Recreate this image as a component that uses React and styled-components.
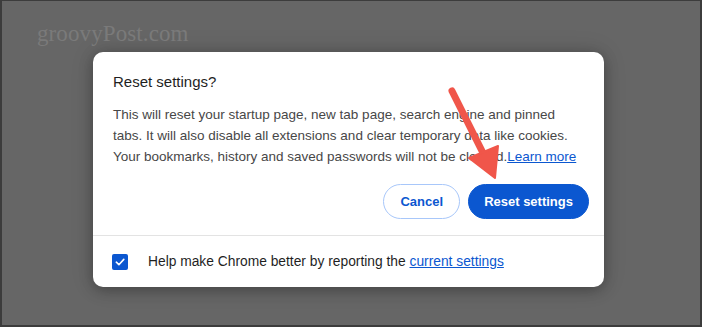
import React from "react";
import styled, { createGlobalStyle } from "styled-components";

const Global = createGlobalStyle`
  html, body { margin: 0; padding: 0; }
  body { width: 702px; height: 327px; overflow: hidden; background: #666; }
  #root { width: 702px; height: 327px; }
`;

const Frame = styled.div`
  position: relative;
  box-sizing: border-box;
  width: 702px;
  height: 327px;
  background: #666666;
  border: 2px solid #3c3c3c;
  border-top-width: 1px;
  padding: 51px 0 0 91px;
  font-family: "Liberation Sans", Arial, sans-serif;
`;

const Watermark = styled.div`
  position: absolute;
  left: 35px;
  top: 20px;
  font-family: "Liberation Serif", "Times New Roman", serif;
  font-size: 23px;
  color: #7a7a7a;
  letter-spacing: 0.1px;
`;

const Dialog = styled.div`
  box-sizing: border-box;
  width: 511px;
  background: #fff;
  border-radius: 10px;
  box-shadow: 0 3px 14px rgba(0, 0, 0, 0.28), 0 0 24px rgba(0, 0, 0, 0.12);
  display: flex;
  flex-direction: column;
`;

const Body = styled.div`
  padding: 20px 15px 16px 20px;
  display: flex;
  flex-direction: column;
`;

const Title = styled.h2`
  margin: 0 0 12px;
  font-size: 15px;
  line-height: 20px;
  font-weight: 400;
  color: #1f1f1f;
`;

const Text = styled.p`
  margin: 0;
  font-size: 13.5px;
  line-height: 21px;
  color: #474747;
  white-space: nowrap;
`;

const Link = styled.a`
  color: #0b57d0;
  text-decoration: underline;
  cursor: pointer;
`;

const Actions = styled.div`
  display: flex;
  justify-content: flex-end;
  gap: 8px;
  margin-top: 17px;
`;

const Button = styled.button`
  box-sizing: border-box;
  height: 35px;
  border-radius: 18px;
  font-family: "Liberation Sans", Arial, sans-serif;
  font-size: 13px;
  font-weight: 700;
  padding: 0 ${(p) => (p.$primary ? "15px" : "16px")};
  border: 1px solid ${(p) => (p.$primary ? "#0b57d0" : "#a8c7fa")};
  background: ${(p) => (p.$primary ? "#0b57d0" : "#fff")};
  color: ${(p) => (p.$primary ? "#fff" : "#0b57d0")};
  cursor: pointer;
`;

const Divider = styled.div`
  height: 1px;
  background: #e3e3e3;
`;

const Footer = styled.div`
  height: 51px;
  display: flex;
  align-items: center;
  padding: 0 0 0 19px;
  gap: 20px;
`;

const Check = styled.span`
  width: 16px;
  height: 16px;
  border-radius: 2px;
  background: #0b57d0;
  display: flex;
  align-items: center;
  justify-content: center;
  flex: none;
`;

const FooterText = styled.span`
  font-size: 13.8px;
  color: #1f1f1f;
`;

const Arrow = styled.svg`
  position: absolute;
  left: 0;
  top: 0;
  pointer-events: none;
`;

export default function App() {
  return (
    <>
      <Global />
      <Frame>
        <Watermark>groovyPost.com</Watermark>
        <Dialog>
          <Body>
            <Title>Reset settings?</Title>
            <Text>
              This will reset your startup page, new tab page, search engine and pinned
              <br />
              tabs. It will also disable all extensions and clear temporary data like cookies.
              <br />
              Your bookmarks, history and saved passwords will not be cleared.
              <Link>Learn more</Link>
            </Text>
            <Actions>
              <Button>Cancel</Button>
              <Button $primary>Reset settings</Button>
            </Actions>
          </Body>
          <Divider />
          <Footer>
            <Check>
              <svg width="12" height="12" viewBox="0 0 12 12">
                <path d="M2.3 6.2 L4.9 8.7 L9.8 3.4" fill="none" stroke="#fff" strokeWidth="1.6" strokeLinecap="round" strokeLinejoin="round" />
              </svg>
            </Check>
            <FooterText>
              Help make Chrome better by reporting the <Link>current settings</Link>
            </FooterText>
          </Footer>
        </Dialog>
        <Arrow width="702" height="327" viewBox="0 0 702 327">
          <line x1="450" y1="90" x2="484" y2="158" stroke="#f0564a" strokeWidth="7" strokeLinecap="round" />
          <polygon points="467,157 496,145 493,177" fill="#f0564a" strokeLinejoin="round" stroke="#f0564a" strokeWidth="2" />
        </Arrow>
      </Frame>
    </>
  );
}
